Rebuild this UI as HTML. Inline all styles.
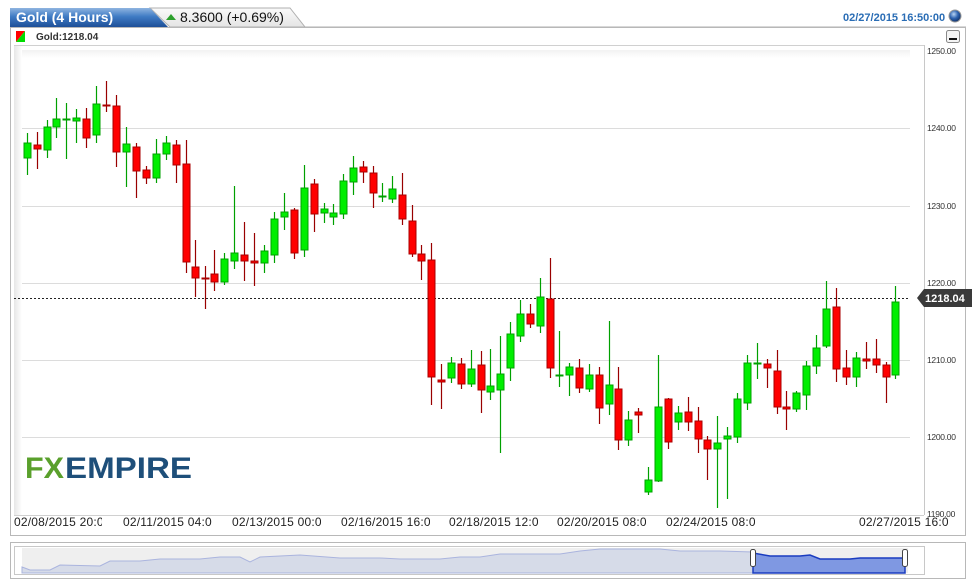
<!DOCTYPE html>
<html><head><meta charset="utf-8"><style>
body{margin:0;background:#fff;width:976px;height:585px;overflow:hidden;font-family:"Liberation Sans",sans-serif}
.g{stroke:#00a000;fill:#00ee00;stroke-width:1}
.r{stroke:#aa0000;fill:#ff0000;stroke-width:1}
.gw{stroke:#00a000;stroke-width:1.2}
.rw{stroke:#990000;stroke-width:1.2}
</style></head><body>
<svg width="976" height="585" xmlns="http://www.w3.org/2000/svg" style="position:absolute;left:0;top:0">
<defs>
<linearGradient id="tb" x1="0" y1="0" x2="0" y2="1"><stop offset="0" stop-color="#8fb4e0"/><stop offset=".45" stop-color="#3f7bc4"/><stop offset="1" stop-color="#1d4f98"/></linearGradient>
<linearGradient id="tg" x1="0" y1="0" x2="0" y2="1"><stop offset="0" stop-color="#fafafa"/><stop offset="1" stop-color="#e4e4e4"/></linearGradient>
<linearGradient id="ls" x1="0" y1="0" x2="1" y2="0"><stop offset="0" stop-color="#e6e6e6"/><stop offset="1" stop-color="#fff"/></linearGradient>
<linearGradient id="ts" x1="0" y1="0" x2="0" y2="1"><stop offset="0" stop-color="#f2f2f2"/><stop offset="1" stop-color="#fff"/></linearGradient>
<radialGradient id="gl" cx=".4" cy=".35" r=".7"><stop offset="0" stop-color="#b8d4f4"/><stop offset=".5" stop-color="#2f64b0"/><stop offset="1" stop-color="#0c2a60"/></radialGradient>
</defs>
<path d="M150 8H290L305 27H170Z" fill="url(#tg)" stroke="#b0b0b0"/>
<path d="M10 8H150L168 27H10Z" fill="url(#tb)"/>
<line x1="305" y1="27" x2="966" y2="27" stroke="#b0b0b0"/>
<text x="16" y="22" font-size="14" font-weight="bold" fill="#fff">Gold (4 Hours)</text>
<path d="M166 20L171 14L176 20Z" fill="#2ca02c"/>
<text x="180" y="22" font-size="14" fill="#111">8.3600 (+0.69%)</text>
<text x="843" y="21" font-size="11" font-weight="bold" fill="#2a6db5">02/27/2015 16:50:00</text>
<circle cx="955" cy="16" r="6" fill="url(#gl)" stroke="#999"/>
<rect x="10.5" y="27.5" width="955" height="508" fill="#fff" stroke="#b8b8b8"/>
<path d="M16 31H25L16 42Z" fill="#ff0000"/><path d="M25 31V42H16Z" fill="#00dd00"/>
<text x="36" y="40" font-size="10" font-weight="bold" fill="#333">Gold:1218.04</text>
<rect x="946.5" y="30.5" width="13" height="12" rx="2" fill="#f4f4f4" stroke="#888"/>
<rect x="949" y="38" width="8" height="2" fill="#111"/>
<rect x="14" y="45" width="8" height="470" fill="url(#ls)"/>
<rect x="22" y="50" width="888" height="8" fill="url(#ts)"/>
<line x1="14" y1="45.5" x2="924" y2="45.5" stroke="#d0d0d0"/>
<line x1="924.5" y1="45" x2="924.5" y2="515" stroke="#c8c8c8"/>
<line x1="14" y1="515.5" x2="924" y2="515.5" stroke="#d0d0d0"/>
<g stroke="#dcdcdc"><line x1="22" y1="128.5" x2="910" y2="128.5"/><line x1="22" y1="206.5" x2="910" y2="206.5"/><line x1="22" y1="283.5" x2="910" y2="283.5"/><line x1="22" y1="360.5" x2="910" y2="360.5"/><line x1="22" y1="437.5" x2="910" y2="437.5"/></g>
<g font-size="8.5" fill="#333" letter-spacing="-0.3"><text x="927" y="54">1250.00</text><text x="927" y="131">1240.00</text><text x="927" y="209">1230.00</text><text x="927" y="286">1220.00</text><text x="927" y="363">1210.00</text><text x="927" y="440">1200.00</text><text x="927" y="517">1190.00</text></g>
<line x1="14" y1="298.5" x2="910" y2="298.5" stroke="#222" stroke-dasharray="2,2"/>
<path d="M917 298L924 289H972V307H924Z" fill="#3a3a3a"/>
<text x="925" y="302" font-size="11" font-weight="bold" fill="#fff">1218.04</text>
<text x="25" y="478" font-size="30" font-weight="bold" fill="#5aa02c" textLength="39" lengthAdjust="spacingAndGlyphs">FX</text>
<text x="65" y="478" font-size="30" font-weight="bold" fill="#1e4f7a" textLength="127" lengthAdjust="spacingAndGlyphs">EMPIRE</text>
<g>
<path class="gw" d="M27.5 133V175"/><rect class="g" x="24" y="143" width="7" height="15"/>
<path class="rw" d="M37.5 132V169"/><rect class="r" x="34" y="145" width="7" height="4"/>
<path class="gw" d="M47.5 120V158"/><rect class="g" x="44" y="127" width="7" height="23"/>
<path class="gw" d="M56.5 98V138"/><rect class="g" x="53" y="119" width="7" height="8"/>
<path class="gw" d="M66.5 103V159"/><rect class="g" x="63" y="119" width="7" height="1"/>
<path class="gw" d="M76.5 109V143"/><rect class="g" x="73" y="118" width="7" height="3"/>
<path class="rw" d="M86.5 108V148"/><rect class="r" x="83" y="119" width="7" height="19"/>
<path class="gw" d="M96.5 86V143"/><rect class="g" x="93" y="104" width="7" height="31"/>
<path class="rw" d="M106.5 81V112"/><rect class="r" x="103" y="105" width="7" height="1"/>
<path class="rw" d="M116.5 95V167"/><rect class="r" x="113" y="106" width="7" height="46"/>
<path class="gw" d="M126.5 127V187"/><rect class="g" x="123" y="144" width="7" height="8"/>
<path class="rw" d="M136.5 143V198"/><rect class="r" x="133" y="147" width="7" height="24"/>
<path class="rw" d="M146.5 166V184"/><rect class="r" x="143" y="170" width="7" height="8"/>
<path class="gw" d="M156.5 139V183"/><rect class="g" x="153" y="154" width="7" height="24"/>
<path class="gw" d="M166.5 136V160"/><rect class="g" x="163" y="143" width="7" height="11"/>
<path class="rw" d="M176.5 140V183"/><rect class="r" x="173" y="145" width="7" height="20"/>
<path class="rw" d="M186.5 140V273"/><rect class="r" x="183" y="164" width="7" height="98"/>
<path class="rw" d="M195.5 240V297"/><rect class="r" x="192" y="267" width="7" height="11"/>
<path class="rw" d="M205.5 266V309"/><rect class="r" x="202" y="278" width="7" height="1"/>
<path class="rw" d="M214.5 250V291"/><rect class="r" x="211" y="274" width="7" height="8"/>
<path class="gw" d="M224.5 253V285"/><rect class="g" x="221" y="259" width="7" height="23"/>
<path class="gw" d="M234.5 186V269"/><rect class="g" x="231" y="253" width="7" height="8"/>
<path class="rw" d="M244.5 222V281"/><rect class="r" x="241" y="255" width="7" height="6"/>
<path class="rw" d="M254.5 233V286"/><rect class="r" x="251" y="261" width="7" height="2"/>
<path class="gw" d="M264.5 245V273"/><rect class="g" x="261" y="251" width="7" height="12"/>
<path class="gw" d="M274.5 212V263"/><rect class="g" x="271" y="219" width="7" height="36"/>
<path class="gw" d="M284.5 193V230"/><rect class="g" x="281" y="212" width="7" height="5"/>
<path class="rw" d="M294.5 208V259"/><rect class="r" x="291" y="210" width="7" height="43"/>
<path class="gw" d="M304.5 165V257"/><rect class="g" x="301" y="188" width="7" height="62"/>
<path class="rw" d="M314.5 179V232"/><rect class="r" x="311" y="184" width="7" height="30"/>
<path class="gw" d="M324.5 203V223"/><rect class="g" x="321" y="209" width="7" height="4"/>
<path class="gw" d="M333.5 204V225"/><rect class="g" x="330" y="213" width="7" height="4"/>
<path class="gw" d="M343.5 174V219"/><rect class="g" x="340" y="181" width="7" height="33"/>
<path class="gw" d="M353.5 156V195"/><rect class="g" x="350" y="168" width="7" height="14"/>
<path class="rw" d="M363.5 161V183"/><rect class="r" x="360" y="167" width="7" height="5"/>
<path class="rw" d="M373.5 166V208"/><rect class="r" x="370" y="173" width="7" height="20"/>
<path class="gw" d="M382.5 183V202"/><rect class="g" x="379" y="196" width="7" height="1"/>
<path class="gw" d="M392.5 176V203"/><rect class="g" x="389" y="189" width="7" height="10"/>
<path class="rw" d="M402.5 173V225"/><rect class="r" x="399" y="195" width="7" height="24"/>
<path class="rw" d="M412.5 205V257"/><rect class="r" x="409" y="221" width="7" height="33"/>
<path class="rw" d="M421.5 245V280"/><rect class="r" x="418" y="254" width="7" height="7"/>
<path class="rw" d="M431.5 243V405"/><rect class="r" x="428" y="260" width="7" height="117"/>
<path class="rw" d="M441.5 364V409"/><rect class="r" x="438" y="380" width="7" height="2"/>
<path class="gw" d="M451.5 357V383"/><rect class="g" x="448" y="363" width="7" height="15"/>
<path class="rw" d="M461.5 358V389"/><rect class="r" x="458" y="364" width="7" height="20"/>
<path class="gw" d="M471.5 350V387"/><rect class="g" x="468" y="369" width="7" height="15"/>
<path class="rw" d="M481.5 351V413"/><rect class="r" x="478" y="365" width="7" height="25"/>
<path class="gw" d="M490.5 349V400"/><rect class="g" x="487" y="386" width="7" height="6"/>
<path class="gw" d="M500.5 336V453"/><rect class="g" x="497" y="374" width="7" height="16"/>
<path class="gw" d="M510.5 322V381"/><rect class="g" x="507" y="334" width="7" height="34"/>
<path class="gw" d="M520.5 300V342"/><rect class="g" x="517" y="314" width="7" height="22"/>
<path class="rw" d="M530.5 304V328"/><rect class="r" x="527" y="314" width="7" height="10"/>
<path class="gw" d="M540.5 278V333"/><rect class="g" x="537" y="297" width="7" height="29"/>
<path class="rw" d="M550.5 258V378"/><rect class="r" x="547" y="299" width="7" height="69"/>
<path class="gw" d="M559.5 331V387"/><rect class="g" x="556" y="375" width="7" height="1"/>
<path class="gw" d="M569.5 363V396"/><rect class="g" x="566" y="367" width="7" height="8"/>
<path class="rw" d="M579.5 359V393"/><rect class="r" x="576" y="368" width="7" height="20"/>
<path class="gw" d="M589.5 364V392"/><rect class="g" x="586" y="375" width="7" height="14"/>
<path class="rw" d="M599.5 367V424"/><rect class="r" x="596" y="375" width="7" height="33"/>
<path class="gw" d="M609.5 321V415"/><rect class="g" x="606" y="385" width="7" height="19"/>
<path class="rw" d="M618.5 367V450"/><rect class="r" x="615" y="389" width="7" height="51"/>
<path class="gw" d="M628.5 411V446"/><rect class="g" x="625" y="420" width="7" height="20"/>
<path class="rw" d="M638.5 408V433"/><rect class="r" x="635" y="412" width="7" height="3"/>
<path class="gw" d="M648.5 467V495"/><rect class="g" x="645" y="480" width="7" height="12"/>
<path class="gw" d="M658.5 355V482"/><rect class="g" x="655" y="407" width="7" height="74"/>
<path class="rw" d="M668.5 398V449"/><rect class="r" x="665" y="399" width="7" height="43"/>
<path class="gw" d="M678.5 406V430"/><rect class="g" x="675" y="413" width="7" height="9"/>
<path class="rw" d="M688.5 397V431"/><rect class="r" x="685" y="412" width="7" height="10"/>
<path class="rw" d="M698.5 407V453"/><rect class="r" x="695" y="421" width="7" height="18"/>
<path class="rw" d="M707.5 436V480"/><rect class="r" x="704" y="440" width="7" height="9"/>
<path class="gw" d="M717.5 416V508"/><rect class="g" x="714" y="443" width="7" height="6"/>
<path class="gw" d="M727.5 427V499"/><rect class="g" x="724" y="436" width="7" height="3"/>
<path class="gw" d="M737.5 393V443"/><rect class="g" x="734" y="399" width="7" height="38"/>
<path class="gw" d="M747.5 355V410"/><rect class="g" x="744" y="363" width="7" height="40"/>
<path class="gw" d="M757.5 343V379"/><rect class="g" x="754" y="363" width="7" height="1"/>
<path class="rw" d="M767.5 359V388"/><rect class="r" x="764" y="364" width="7" height="4"/>
<path class="rw" d="M777.5 350V414"/><rect class="r" x="774" y="371" width="7" height="36"/>
<path class="rw" d="M786.5 391V430"/><rect class="r" x="783" y="407" width="7" height="2"/>
<path class="gw" d="M796.5 391V412"/><rect class="g" x="793" y="393" width="7" height="16"/>
<path class="gw" d="M806.5 361V410"/><rect class="g" x="803" y="366" width="7" height="29"/>
<path class="gw" d="M816.5 335V374"/><rect class="g" x="813" y="348" width="7" height="18"/>
<path class="gw" d="M826.5 281V348"/><rect class="g" x="823" y="309" width="7" height="37"/>
<path class="rw" d="M836.5 288V382"/><rect class="r" x="833" y="307" width="7" height="62"/>
<path class="rw" d="M846.5 350V385"/><rect class="r" x="843" y="368" width="7" height="9"/>
<path class="gw" d="M856.5 352V387"/><rect class="g" x="853" y="358" width="7" height="19"/>
<path class="rw" d="M866.5 342V369"/><rect class="r" x="863" y="359" width="7" height="2"/>
<path class="rw" d="M876.5 339V373"/><rect class="r" x="873" y="359" width="7" height="6"/>
<path class="rw" d="M886.5 362V403"/><rect class="r" x="883" y="365" width="7" height="12"/>
<path class="gw" d="M895.5 286V379"/><rect class="g" x="892" y="302" width="7" height="73"/>
</g>
<g font-size="12" fill="#222" letter-spacing="0.2">
<svg x="14" y="512" width="88" height="16"><text x="0" y="14">02/08/2015 20:00</text></svg>
<svg x="123" y="512" width="89" height="16"><text x="0" y="14">02/11/2015 04:00</text></svg>
<svg x="232" y="512" width="89" height="16"><text x="0" y="14">02/13/2015 00:00</text></svg>
<svg x="341" y="512" width="89" height="16"><text x="0" y="14">02/16/2015 16:00</text></svg>
<svg x="449" y="512" width="89" height="16"><text x="0" y="14">02/18/2015 12:00</text></svg>
<svg x="557" y="512" width="89" height="16"><text x="0" y="14">02/20/2015 08:00</text></svg>
<svg x="666" y="512" width="89" height="16"><text x="0" y="14">02/24/2015 08:00</text></svg>
<svg x="859" y="512" width="89" height="16"><text x="0" y="14">02/27/2015 16:00</text></svg>
</g>
<rect x="10.5" y="542.5" width="955" height="36" fill="#fff" stroke="#b8b8b8"/>
<rect x="14.5" y="546.5" width="910" height="28" fill="#fff" stroke="#c8c8c8"/>
<rect x="22" y="548" width="886" height="25" fill="#efefef"/>
<path d="M22 573V567L30 570L50 570L60 565L100 566L110 561L140 561L160 559L200 559L220 557L240 557L250 562L260 557L300 555L340 558L380 558L400 559L440 559L460 557L480 557L500 554L560 554L580 551L600 549L660 549L680 551L720 551L753 552V573Z" fill="#d6dbe8" stroke="#aab4de"/>
<path d="M753 573V553L770 556L800 556L810 555L820 559L850 559L860 558L905 558V573Z" fill="#7f98e2" stroke="#1a3cc0" stroke-width="1.5"/>
<rect x="750.5" y="549.5" width="5" height="17" rx="2" fill="#fff" stroke="#444"/>
<rect x="902.5" y="549.5" width="5" height="17" rx="2" fill="#fff" stroke="#444"/>
</svg>
</body></html>
